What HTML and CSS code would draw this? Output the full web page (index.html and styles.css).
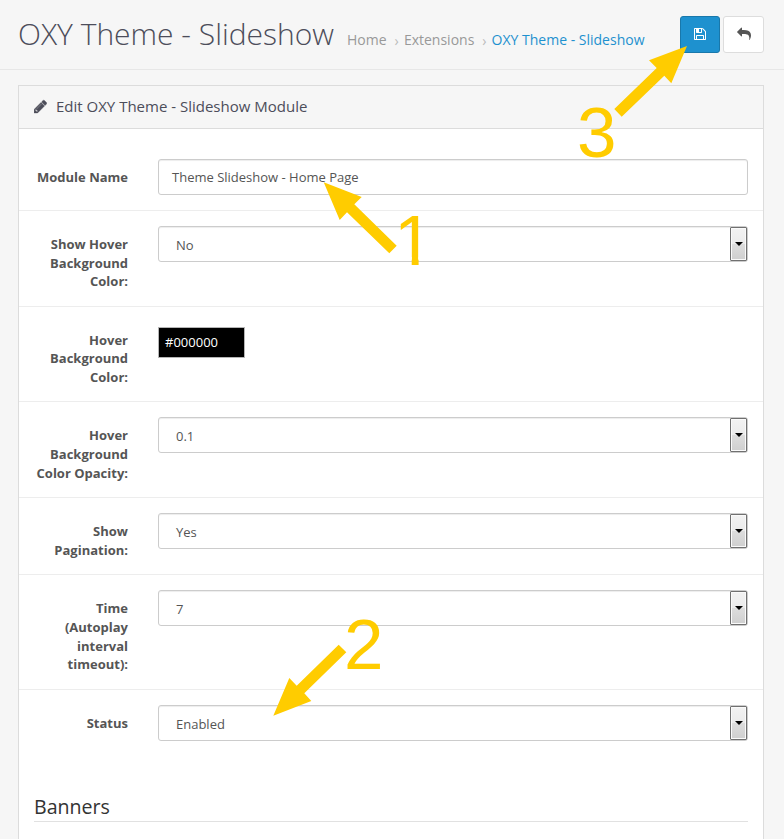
FILE: index.html
```html
<!DOCTYPE html>
<html lang="en">
<head>
<meta charset="utf-8">
<title>OXY Theme - Slideshow</title>
<link rel="stylesheet" href="styles.css">
</head>
<body>
<header class="page-header">
  <h1>OXY Theme - Slideshow</h1>
  <nav class="breadcrumb">
    <a class="home">Home</a><span class="sep">›</span><a class="ext">Extensions</a><span class="sep">›</span><a class="current">OXY Theme - Slideshow</a>
  </nav>
  <div class="actions">
    <button class="btn btn-primary" aria-label="Save"><svg width="12" height="14" viewBox="0 0 1536 1792"><path d="M384 1536h768v-384h-768v384zM1280 1536h128v-896q0-14-10-38.5t-20-34.5l-281-281q-10-10-34-20t-39-10v416q0 40-28 68t-68 28h-576q-40 0-68-28t-28-68v-416h-128v1280h128v-416q0-40 28-68t68-28h832q40 0 68 28t28 68v416zM896 608v-320q0-13-9.5-22.5t-22.5-9.5h-192q-13 0-22.5 9.5t-9.5 22.5v320q0 13 9.5 22.5t22.5 9.5h192q13 0 22.5-9.5t9.5-22.5zM1536 640v928q0 40-28 68t-68 28h-1344q-40 0-68-28t-28-68v-1344q0-40 28-68t68-28h928q40 0 88 20t76 48l280 280q28 28 48 76t20 88z"/></svg></button>
    <button class="btn btn-default" aria-label="Back"><svg width="14" height="14" viewBox="0 0 1792 1792"><path d="M1792 1120q0 166-127 451-3 7-10.5 24t-13.5 30-13 22q-12 17-28 17-15 0-23.5-10t-8.5-25q0-9 2.5-26.5t2.5-23.5q5-68 5-123 0-101-17.5-181t-48.5-138.5-80-101-105.5-69.5-133-42.5-154-21.5-175.5-6h-224v256q0 26-19 45t-45 19-45-19l-512-512q-19-19-19-45t19-45l512-512q19-19 45-19t45 19 19 45v256h224q713 0 875 403 53 134 53 333z"/></svg></button>
  </div>
</header>
<main class="panel">
  <div class="panel-heading">
    <svg width="13" height="15" viewBox="0 0 1536 1792"><path d="M363 1536l91-91-235-235-91 91v107h128v128h107zM886 608q0-22-22-22-10 0-17 7l-542 542q-7 7-7 17 0 22 22 22 10 0 17-7l542-542q7-7 7-17zM832 416l416 416-832 832h-416v-416zM1515 512q0 53-37 90l-166 166-416-416 166-165q36-38 90-38 53 0 91 38l235 234q37 39 37 91z"/></svg>
    <h2>Edit OXY Theme - Slideshow Module</h2>
  </div>
  <form class="panel-body">
    <div class="row"><label>Module Name</label><div class="control">Theme Slideshow - Home Page</div></div>
    <div class="row"><label>Show Hover Background Color:</label><div class="control select">No<i class="drop"></i></div></div>
    <div class="row"><label>Hover Background Color:</label><div class="color">#000000</div></div>
    <div class="row"><label>Hover Background Color Opacity:</label><div class="control select">0.1<i class="drop"></i></div></div>
    <div class="row"><label>Show Pagination:</label><div class="control select">Yes<i class="drop"></i></div></div>
    <div class="row"><label>Time (Autoplay interval timeout):</label><div class="control select">7<i class="drop"></i></div></div>
    <div class="row"><label>Status</label><div class="control select">Enabled<i class="drop"></i></div></div>
    <h3>Banners</h3>
  </form>
</main>
<svg class="annotations" width="784" height="839" viewBox="0 0 784 839">
  <defs><clipPath id="stem"><path d="M394 205H430V257H418.6V270H411.7V257H394z"/></clipPath></defs>
  <path d="M323.7 182.3L361.7 197L354.3 204.3L396.7 245.7L389.3 253.3L347 212.3L339.7 220z"/>
  <path d="M273.3 715.7L289.3 678L296.7 685.7L338.7 644.7L346.3 652.3L304.3 693.3L311.3 701z"/>
  <path d="M687 46L649 60.3L656.7 68L614.3 109L621.7 116.7L664.3 75.7L671.3 83.3z"/>
  <text x="394" y="265" clip-path="url(#stem)">1</text>
  <text x="344" y="669">2</text>
  <text x="577" y="156.5">3</text>
</svg>
</body>
</html>
```
FILE: styles.css
```css
* { box-sizing: border-box; }
body {
  margin: 0;
  height: 839px;
  overflow: hidden;
  position: relative;
  background: #f6f6f6;
  color: #555;
  font: 13px/18.58px "Open Sans", sans-serif;
}
h1, h2, h3 { margin: 0; font-weight: 400; }
.page-header {
  height: 70px;
  padding: 0 20px 0 18px;
  border-bottom: 1px solid #e7e7e7;
  display: flex;
  align-items: flex-start;
}
h1 {
  width: 329px;
  padding-top: 14px;
  font-size: 30px;
  line-height: 40px;
  font-weight: 300;
  color: #4c4d5a;
  white-space: nowrap;
}
.breadcrumb {
  padding-top: 30px;
  font-size: 14px;
  line-height: 20px;
  color: #999;
  white-space: nowrap;
  display: flex;
}
.sep { width: 17.3px; padding: 1px 0 0 8px; color: #bbb; }
.current { color: #1e91cf; }
.actions { margin: 16px 0 0 auto; display: flex; gap: 3px; }
.btn {
  height: 37px;
  padding: 0 0 1px;
  border-radius: 3px;
  display: flex;
  align-items: center;
  justify-content: center;
}
.btn-primary { width: 40px; background: #1e91cf; border: 1px solid #1978ab; fill: #fff; }
.btn-default { width: 41px; background: #fff; border: 1px solid #ddd; fill: #555; }
.panel {
  margin: 15px 20px 0 18px;
  height: 770px;
  border: 1px solid #dcdcdc;
  background: #fff;
}
.panel-heading {
  height: 43px;
  padding: 0 0 2px 15px;
  display: flex;
  align-items: center;
  gap: 9px;
  background: #f6f6f6;
  border-bottom: 1px solid #dcdcdc;
  fill: #4c4d5a;
}
.panel-heading path { stroke: #4c4d5a; stroke-width: 50; }
h2 { font-size: 15px; line-height: 20px; color: #4c4d5a; }
.panel-body { padding-top: 15px; }
.row {
  display: flex;
  align-items: flex-start;
  padding: 15px 15px 15px 0;
}
.row + .row { border-top: 1px solid #ededed; }
.row label {
  width: 109px;
  margin-right: 30px;
  padding: 9px 0 0 15px;
  font-weight: 700;
  text-align: right;
}
.control {
  flex: 1;
  height: 36px;
  padding: 8px 13px;
  border: 1px solid #ccc;
  border-radius: 3px;
  box-shadow: inset 0 1px 1px rgba(0, 0, 0, .075);
}
.select { display: flex; padding: 9px 0 0 17px; }
.drop {
  width: 17px;
  height: 34px;
  margin: -9px 0 0 auto;
  border: 1px solid #707070;
  border-radius: 1px;
  box-shadow: inset 0 0 0 1px #fafafa;
  background: linear-gradient(#f2f2f2, #ebebeb 50%, #ddd 50%, #cfcfcf);
  display: flex;
  align-items: center;
  justify-content: center;
}
.drop::before {
  content: "";
  border: 4px solid transparent;
  border-top-color: #000;
  border-bottom: 0;
}
.color {
  width: 87px;
  height: 31px;
  margin-top: 5px;
  padding: 5px 6px;
  border: 1px solid #b5b5b5;
  background: #000;
  color: #fff;
}
h3 {
  margin: 38.3px 15px 0;
  padding-bottom: 1px;
  border-bottom: 1px solid #e1e1e1;
  font-size: 19.6px;
  line-height: 26px;
  color: #333;
}
.annotations { position: absolute; left: 0; top: 0; fill: #fc0; }
.annotations text { font: 71px "Liberation Sans", sans-serif; }
```
